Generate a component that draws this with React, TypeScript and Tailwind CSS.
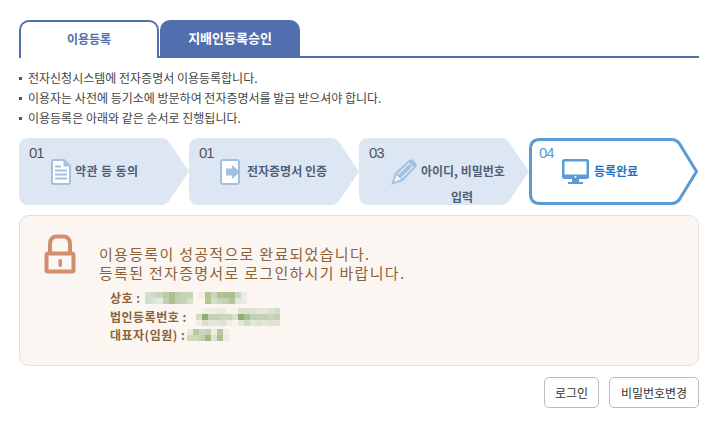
import type { ReactNode } from "react";

const KR = "font-['Noto_Sans_CJK_KR','Noto_Sans',sans-serif]";

const notices = [
  "전자신청시스템에 전자증명서 이용등록합니다.",
  "이용자는 사전에 등기소에 방문하여 전자증명서를 발급 받으셔야 합니다.",
  "이용등록은 아래와 같은 순서로 진행됩니다.",
];

const nameMosaic = [
  "#d4e0cf #cfd9c6 #c8d6bc #b9cba8 #a9bf8f #c0cfae #c7d3b8 #c8d4b9 #fbf5ee #f3ede2 #b3c495 #cdd6c0 #b4c191 #b2c18e #a9c18e #cbd6c0 #e8ebe2",
  "#cfdcd0 #dde5d6 #e8eadb #c5cfae #a9bf8f #c2cfb5 #c7d3b8 #dcdfc6 #fbf5ee #fbf5ee #b3c495 #d5ddcb #c9d5bd #c3d0b3 #b0c79e #e3e7d9 #e8ebe2",
];
const regMosaic = [
  "#f8f3ec #eef0e5 #eef0e5 #ecebdf #ecebdf #f8f3ec #f8f3ec #dde3d0 #d9e1cc #dde3d0 #e3e7d9 #e3e7d9 #dde3d0 #d3dcc4",
  "#d3dcc4 #8fae72 #c3d0b3 #c3d0b3 #c9d5bd #c9d5bd #d9e1cc #8cae70 #a9c18e #c3d0b3 #c3d0b3 #c3d0b3 #c9d5bd #c3d0b3",
  "#f0efe4 #dbe1cd #e3e7d9 #e3e7d9 #dde3d0 #eceee2 #f8f3ec #e3e7d9 #d3dcc4 #e3e7d9 #dde3d0 #e3e7d9 #dde3d0 #dde3d0",
];
const repMosaic = [
  "#ece9da #b9c79e #c9d5bd #c3d0b3 #eceee2 #b5c9a2 #f3f1e6",
  "#d3d9b8 #d3d9b8 #c3d0b3 #9dbb7f #dde3d0 #a9c18e #eceee2",
];

// pixelated blur over the private values
const Mosaic = ({ rows, cell }: { rows: string[]; cell: number }) => {
  const grid = rows.map((r) => r.split(" "));
  const w = grid[0].length * 6;
  const h = grid.length * cell;
  return (
    <svg width={w} height={h} viewBox={`0 0 ${w} ${h}`} className="block shrink-0" shapeRendering="crispEdges">
      {grid.map((row, r) => row.map((fill, c) => <rect key={`${r}-${c}`} x={c * 6} y={r * cell} width={6} height={cell} fill={fill} />))}
    </svg>
  );
};

const DocIcon = () => (
  <svg width="20" height="26" viewBox="0 0 20 26">
    <path d="M3 1H13L19 7V23Q19 25 17 25H3Q1 25 1 23V3Q1 1 3 1Z" fill="#fff" stroke="#a3c1de" strokeWidth="2" />
    <path d="M12.5 1.5V7.5H18.5Z" fill="#a3c1de" />
    <path d="M4 11.5H16M4 15.5H16M4 19.5H16M4 7.5H10" stroke="#a3c1de" strokeWidth="2" />
  </svg>
);

const ExportIcon = () => (
  <svg width="20" height="26" viewBox="0 0 20 26">
    <rect x="1" y="1" width="18" height="24" rx="2" fill="#fff" stroke="#a3c1de" strokeWidth="2" />
    <path d="M6 9.5H12V6L20 13L12 20V16.5H6Z" fill="#a3c1de" />
  </svg>
);

const PencilIcon = () => (
  <svg width="26" height="26" viewBox="0 0 26 26">
    <path d="M0 26L4 14L18 1Q20 -0.5 22 1L25 4Q26.5 6 25 8L12 22Z" fill="#a3c1de" />
    <path d="M6.5 15.5L18 4.5M10 19.5L21.5 8" stroke="#dce7f3" strokeWidth="1.5" />
    <path d="M3 23L5.5 16L10 20.5Z" fill="#f2f6fa" />
    <path d="M17 3.5L22.5 9" stroke="#dce7f3" strokeWidth="1" />
  </svg>
);

const ScreenIcon = () => (
  <svg width="28" height="26" viewBox="0 0 28 26">
    <rect x="0" y="0" width="27" height="20" rx="2.5" fill="#5b9bd5" />
    <rect x="2.5" y="2.5" width="22" height="13" fill="#fff" />
    <circle cx="13.5" cy="17.8" r="1" fill="#fff" />
    <path d="M10 20H17V23H21V25H6V23H10Z" fill="#5b9bd5" />
  </svg>
);

const LockIcon = () => (
  <svg width="32" height="40" viewBox="0 0 32 40">
    <path d="M6 19V10Q6 2.5 13 2.5H19Q26 2.5 26 10V19" fill="none" stroke="#d38e6e" strokeWidth="4" />
    <rect x="2.5" y="19.5" width="27" height="18" rx="1.5" fill="#fcf6f2" stroke="#d38e6e" strokeWidth="4" />
    <rect x="14.5" y="25" width="3.5" height="8" rx="1.7" fill="#d38e6e" />
  </svg>
);

const Step = ({
  num,
  icon,
  active,
  children,
}: {
  num: string;
  icon: ReactNode;
  active?: boolean;
  children: ReactNode;
}) => (
  <div className="relative h-[67px] w-[170px] shrink-0">
    <svg width="170" height="67" viewBox="0 0 170 67" className="absolute left-0 top-0">
      <path
        d={
          active
            ? "M11 1.5H143Q147 1.5 150 5L167.5 33.5L150 62Q147 65.5 143 65.5H11Q1.5 65.5 1.5 56V11Q1.5 1.5 11 1.5Z"
            : "M10 0H142Q147 0 150 4L170 33.5L150 63Q147 67 142 67H10Q0 67 0 57V10Q0 0 10 0Z"
        }
        fill={active ? "#fff" : "#dce7f3"}
        stroke={active ? "#5b9bd5" : "none"}
        strokeWidth={active ? 3 : 0}
      />
    </svg>
    <div className={`absolute left-[10px] top-[6px] font-['Liberation_Sans',sans-serif] text-[15px] leading-[18px] tracking-[-1px] ${active ? "text-[#5b9bd5]" : "text-[#555555]"}`}>
      {num}
    </div>
    {icon}
    {children}
  </div>
);

export default function App() {
  return (
    <div className={`h-[424px] w-[728px] overflow-hidden bg-white pl-[19px] pt-[20px] ${KR}`}>
      <div className="w-[680px]">
        <div className="flex h-[38px] items-end border-b-2 border-[#516fae]">
          <div className="relative z-10 -mb-[2px] flex h-[38px] w-[140px] items-center justify-center rounded-t-[10px] border-x-2 border-t-2 border-[#516fae] bg-white pb-[2px] text-[12px] font-bold text-[#516fae]">
            이용등록
          </div>
          <div className="ml-px flex h-[36px] w-[140px] self-start items-center justify-center rounded-t-[10px] bg-[#516fae] text-[13px] font-bold text-white">
            지배인등록승인
          </div>
        </div>

        <ul className="mt-[10px] flex flex-col text-[12px] leading-[20px] text-[#444444]">
          {notices.map((n) => (
            <li key={n} className="flex items-center">
              <span className="mr-[6px] h-[3px] w-[3px] bg-[#555555]" />
              {n}
            </li>
          ))}
        </ul>

        <div className="mt-[10px] flex">
          <Step num="01" icon={<div className="absolute left-[32px] top-[21px]"><DocIcon /></div>}>
            <div className="absolute left-[56px] top-[24px] text-[12px] font-bold leading-[18px] tracking-[0.4px] text-[#4f5f78]">약관 등 동의</div>
          </Step>
          <Step num="01" icon={<div className="absolute left-[31px] top-[21px]"><ExportIcon /></div>}>
            <div className="absolute left-[58px] top-[24px] text-[12px] font-bold leading-[18px] text-[#4f5f78]">전자증명서 인증</div>
          </Step>
          <Step num="03" icon={<div className="absolute left-[32px] top-[21px]"><PencilIcon /></div>}>
            <div className="absolute left-[62px] top-[24px] text-[12px] font-bold leading-[18px] text-[#4f5f78]">아이디, 비밀번호</div>
            <div className="absolute left-[92px] top-[50px] text-[12px] font-bold leading-[18px] text-[#4f5f78]">입력</div>
          </Step>
          <Step num="04" active icon={<div className="absolute left-[33px] top-[21px]"><ScreenIcon /></div>}>
            <div className="absolute left-[65px] top-[24px] text-[12px] font-bold leading-[18px] text-[#1f73c4]">등록완료</div>
          </Step>
        </div>

        <div className="mt-[10px] flex h-[151px] rounded-[10px] border border-[#eaddd2] bg-[#fcf6f2] pl-[24px] pt-[18px]">
          <div className="shrink-0"><LockIcon /></div>
          <div className="ml-[23px] pt-[10px] text-[#8c6239]">
            <p className="text-[15px] leading-[19px] tracking-[1.3px]">이용등록이 성공적으로 완료되었습니다.</p>
            <p className="text-[15px] leading-[19px] tracking-[1.3px]">등록된 전자증명서로 로그인하시기 바랍니다.</p>
            <div className="ml-[11px] mt-[7px] flex flex-col text-[12px] font-bold leading-[18.5px] tracking-[0.5px]">
              <div className="flex items-center gap-[4px]">상호 :<Mosaic rows={nameMosaic} cell={6} /></div>
              <div className="flex h-[18.5px] items-center gap-[9px]">법인등록번호 :<Mosaic rows={regMosaic} cell={6} /></div>
              <div className="flex items-center gap-[2px]">대표자(임원) :<Mosaic rows={repMosaic} cell={6} /></div>
            </div>
          </div>
        </div>

        <div className="mt-[11px] flex justify-end gap-[10px]">
          <button className="h-[31px] w-[55px] rounded-[5px] border border-[#bbbbbb] bg-white text-[12px] text-[#333333]">로그인</button>
          <button className="h-[31px] w-[90px] rounded-[5px] border border-[#bbbbbb] bg-white text-[12px] text-[#333333]">비밀번호변경</button>
        </div>
      </div>
    </div>
  );
}
